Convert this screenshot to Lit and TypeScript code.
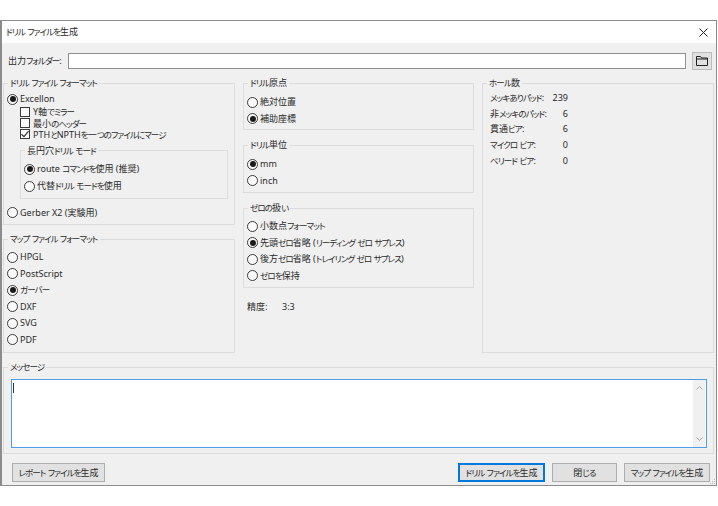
import { LitElement, html, css } from "lit";
import { customElement } from "lit/decorators.js";

/* Kana in the reference is much narrower than kanji, so kana runs get their own class. */
const t = (s: string) => s.split(/([\u3040-\u30ff]+)/).map((p, i) => (i % 2 ? html`<span class="k">${p}</span>` : p));
const radio = (label: string, on = false) => html`<div class="row"><span class="radio ${on ? "on" : ""}"></span><span>${t(label)}</span></div>`;
const check = (label: string, on = false) => html`<div class="chk"><span class="box">${on ? html`<svg viewBox="0 0 10 10" width="10" height="10"><path d="M1.5 5.2 4 7.6 8.6 2.2" fill="none" stroke="#333" stroke-width="1.2"/></svg>` : ""}</span><span>${t(label)}</span></div>`;

@customElement("app-root")
export class AppRoot extends LitElement {
  static styles = css`
    :host { display: block; width: 718px; height: 506px; background: #fff; overflow: hidden;
      font-family: "Noto Sans", "Noto Sans CJK JP", sans-serif; font-size: 9px; color: #2a2a2a;
      font-feature-settings: "palt"; line-height: 12px; white-space: nowrap; }
    .k { font-size: 8.5px; letter-spacing: -0.9px; }
    .win { margin-top: 20px; width: 717px; height: 466px; box-sizing: border-box; border: 1px solid #8c8c8c; border-width: 1px 1px 1px 2px; background: #f0f0f0; display: flex; flex-direction: column; position: relative; }
    .title { height: 22px; flex: none; background: #fff; display: flex; align-items: center; justify-content: space-between; padding: 0 8px 0 4px; }
    .title svg { display: block; }
    .out { display: flex; align-items: center; height: 18px; margin-top: 9px; padding-left: 6px; flex: none; }
    .out label { width: 60px; flex: none; }
    .input { width: 618px; height: 16px; box-sizing: border-box; background: #fff; border: 1px solid #8f8f8f; flex: none; }
    .fbtn { width: 20px; height: 18px; margin-left: 6px; box-sizing: border-box; background: #e1e1e1; border: 1px solid #bcbcbc; display: flex; align-items: center; justify-content: center; flex: none; }
    .main { display: grid; grid-template-columns: 232px 231px 232px; column-gap: 8px; margin: 7px 0 0 1px; flex: none; }
    .col { display: flex; flex-direction: column; }
    fieldset { margin: 0; padding: 0 0 0 3px; border: 1px solid #dcdcdc; box-sizing: border-box; min-width: 0; }
    legend { padding: 0 2px; margin-left: 1px; line-height: 12px; }
    .row { height: 16.5px; display: flex; align-items: center; gap: 2px; }
    .radio { width: 11px; height: 11px; box-sizing: border-box; border: 1px solid #3a3a3a; border-radius: 50%; background: #fbfbfb; display: flex; align-items: center; justify-content: center; flex: none; }
    .radio.on::after { content: ""; width: 6px; height: 6px; border-radius: 50%; background: #1a1a1a; }
    .checks { margin-top: -1.5px; }
    .chk { height: 11.4px; line-height: 11px; display: flex; align-items: center; gap: 3px; padding-left: 13px; }
    .box { width: 10px; height: 10px; box-sizing: border-box; border: 1px solid #3a3a3a; background: #fbfbfb; flex: none; position: relative; }
    .box svg { position: absolute; left: -1px; top: -1px; }
    .fmt { height: 148px; padding-top: 2px; }
    .inner { height: 54px; margin: 4.5px 6px 0 13px; padding: 4px 0 0 3px; }
    .inner .row { height: 17px; }
    .gerber { margin-top: 6px; }
    .map { height: 120px; margin-top: 8px; padding-top: 4px; }
    .origin { height: 53px; padding-top: 5px; }
    .unit { height: 54px; margin-top: 9px; padding-top: 5px; }
    .zero { height: 86px; margin-top: 9px; padding-top: 4px; }
    .prec { display: flex; margin: 13px 0 0 4px; }
    .prec span:first-child { width: 35px; }
    .holes { height: 276px; padding: 1px 0 0 7px; }
    .holes legend { margin-left: -3px; }
    .hrow { display: flex; width: 78px; height: 15.7px; align-items: center; justify-content: space-between; }
    .msg { height: 93px; margin: 8px 0 0 1px; width: 711px; padding: 6px 0 0 7px; flex: none; }
    .msg legend { margin-left: -3px; }
    .area { width: 696px; height: 69px; box-sizing: border-box; border: 1px solid #4a9fe6; background: #fff; display: flex; justify-content: space-between; padding-right: 1px; }
    .caret { width: 1px; height: 10px; background: #333; margin: 3px 0 0 1px; }
    .sb { width: 12px; background: #f0f0f0; display: flex; flex-direction: column; justify-content: space-between; align-items: center; padding: 6px 0; box-sizing: border-box; }
    .sb svg { display: block; }
    .btns { display: flex; margin: 9px 0 0 10px; flex: none; }
    button { font: inherit; font-feature-settings: inherit; color: inherit; height: 19px; box-sizing: border-box; background: #e1e1e1; border: 1px solid #adadad; padding: 0; flex: none; }
    .b1 { width: 93px; margin-right: 353px; }
    .b2 { width: 87px; border: 2px solid #0078d7; }
    .b3 { width: 65px; margin-left: 7px; }
    .b4 { width: 86px; margin-left: 7px; }
    .grip { position: absolute; right: 0; bottom: 0; }
  `;

  render() {
    return html`<div class="win">
      <div class="title"><span>${t("ドリル ファイルを生成")}</span>
        <svg width="9" height="9" viewBox="0 0 9 9"><path d="M.5.5l8 8M8.5.5l-8 8" stroke="#222" stroke-width="1" fill="none"/></svg></div>
      <div class="out"><label>${t("出力フォルダー:")}</label><div class="input"></div>
        <div class="fbtn"><svg width="12" height="10" viewBox="0 0 12 10"><path d="M.5 9.5V.5h4l1 1.5h6v7.5z M.5 3h11" fill="none" stroke="#222"/></svg></div></div>
      <div class="main">
        <div class="col">
          <fieldset class="fmt"><legend>${t("ドリル ファイル フォーマット")}</legend>
            ${radio("Excellon", true)}
            <div class="checks">${check("Y軸でミラー")}${check("最小のヘッダー")}${check("PTHとNPTHを一つのファイルにマージ", true)}</div>
            <fieldset class="inner"><legend>${t("長円穴ドリル モード")}</legend>
              ${radio("route コマンドを使用 (推奨)", true)}${radio("代替ドリル モードを使用")}
            </fieldset>
            <div class="gerber">${radio("Gerber X2 (実験用)")}</div>
          </fieldset>
          <fieldset class="map"><legend>${t("マップ ファイル フォーマット")}</legend>
            ${radio("HPGL")}${radio("PostScript")}${radio("ガーバー", true)}${radio("DXF")}${radio("SVG")}${radio("PDF")}
          </fieldset>
        </div>
        <div class="col">
          <fieldset class="origin"><legend>${t("ドリル原点")}</legend>${radio("絶対位置")}${radio("補助座標", true)}</fieldset>
          <fieldset class="unit"><legend>${t("ドリル単位")}</legend>${radio("mm", true)}${radio("inch")}</fieldset>
          <fieldset class="zero"><legend>${t("ゼロの扱い")}</legend>
            ${radio("小数点フォーマット")}${radio("先頭ゼロ省略 (リーディング ゼロ サプレス)", true)}${radio("後方ゼロ省略 (トレイリング ゼロ サプレス)")}${radio("ゼロを保持")}
          </fieldset>
          <div class="prec"><span>精度:</span><span>3:3</span></div>
        </div>
        <div class="col">
          <fieldset class="holes"><legend>${t("ホール数")}</legend>
            ${[["メッキありパッド:", "239"], ["非メッキのパッド:", "6"], ["貫通ビア:", "6"], ["マイクロ ビア:", "0"], ["ベリード ビア:", "0"]].map(([a, b]) => html`<div class="hrow"><span>${t(a)}</span><span>${b}</span></div>`)}
          </fieldset>
        </div>
      </div>
      <fieldset class="msg"><legend>${t("メッセージ")}</legend>
        <div class="area"><div class="caret"></div>
          <div class="sb">
            <svg width="7" height="4" viewBox="0 0 7 4"><path d="M.5 3.5l3-3 3 3" fill="none" stroke="#a6a6a6"/></svg>
            <svg width="7" height="4" viewBox="0 0 7 4"><path d="M.5.5l3 3 3-3" fill="none" stroke="#a6a6a6"/></svg>
          </div></div>
      </fieldset>
      <div class="btns">
        <button class="b1">${t("レポート ファイルを生成")}</button>
        <button class="b2">${t("ドリル ファイルを生成")}</button>
        <button class="b3">${t("閉じる")}</button>
        <button class="b4">${t("マップ ファイルを生成")}</button>
      </div>
      <svg class="grip" width="7" height="7" viewBox="0 0 7 7"><path d="M5 1h1v1H5zM3 3h1v1H3zM5 3h1v1H5zM1 5h1v1H1zM3 5h1v1H3zM5 5h1v1H5z" fill="#b5b5b5"/></svg>
    </div>`;
  }
}
